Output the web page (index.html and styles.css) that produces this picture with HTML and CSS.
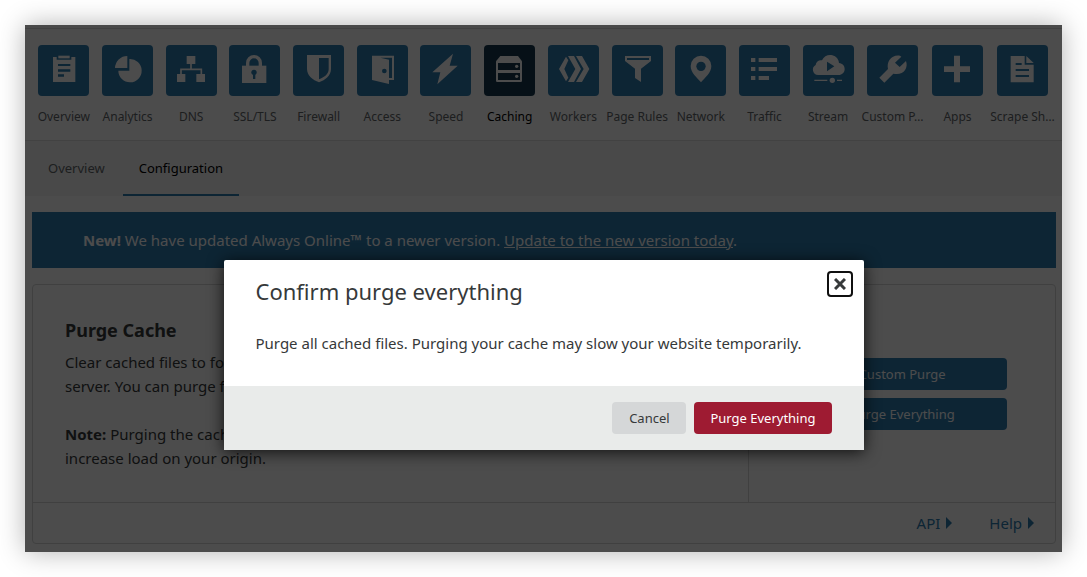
FILE: index.html
```html
<!DOCTYPE html>
<html lang="en">
<head>
<meta charset="utf-8">
<meta name="viewport" content="width=device-width, initial-scale=1">
<title>Caching – Configuration</title>
<link rel="stylesheet" href="styles.css">
</head>
<body>
<div class="window">
  <div class="topbar"></div>
  <nav class="apps" aria-label="Products">
    <a class="app" href="#"><span class="tile"><svg viewBox="0 0 153 153"><path class="f" d="M45 36H56V44H100V36H112V111H45Z"/><path class="f" d="M61 32H95V40H61Z"/><path class="d" d="M60 57H97V63H60ZM60 73H97V80H60ZM60 88H78V95H60Z"/></svg></span><span class="name">Overview</span></a>
    <a class="app" href="#"><span class="tile"><svg viewBox="0 0 153 153"><path class="f" d="M76 69H39A37 37 0 0 1 76 33Z"/><path class="f" d="M82 42A35 35 0 1 1 49 77H82Z"/></svg></span><span class="name">Analytics</span></a>
    <a class="app" href="#"><span class="tile"><svg viewBox="0 0 153 153"><path class="f" d="M62 33H88V57H62ZM33 87H58V111H33ZM91 87H117V111H91Z"/><path class="s" stroke-width="5" d="M75 57V73M45 88V73H106V88"/></svg></span><span class="name">DNS</span></a>
    <a class="app" href="#"><span class="tile"><svg viewBox="0 0 153 153"><path class="f" d="M39 62H112V114H39Z"/><path class="s" stroke-width="10" d="M56 64V54A19 19 0 0 1 94 54V64"/><circle class="d" cx="75" cy="82" r="8"/><path class="d" d="M72 82H79V102H72Z"/></svg></span><span class="name">SSL/TLS</span></a>
    <a class="app" href="#"><span class="tile"><svg viewBox="0 0 153 153"><path class="f" d="M42 30H114V72C114 91 97 105 78 112C59 105 42 91 42 72Z"/><path class="d" d="M78 39H107V72C107 88 93 97 78 103Z"/></svg></span><span class="name">Firewall</span></a>
    <a class="app" href="#"><span class="tile"><svg viewBox="0 0 153 153"><path class="f" d="M45 32H111V105H94V99H105V38H70L96 44V117L45 105Z"/><circle class="d" cx="82" cy="78" r="7"/></svg></span><span class="name">Access</span></a>
    <a class="app" href="#"><span class="tile"><svg viewBox="0 0 153 153"><path class="f" d="M99 26L37 82H61L52 118L113 62H89Z"/></svg></span><span class="name">Speed</span></a>
    <a class="app current" href="#" aria-current="page"><span class="tile"><svg viewBox="0 0 153 153"><path class="f" d="M49 33H102L114 49V107Q114 111 110 111H40Q36 111 36 107V49Z"/><path class="d" d="M42 54H108V75H42ZM42 84H108V105H42Z"/><circle class="f" cx="98" cy="64" r="5"/><circle class="f" cx="98" cy="94" r="5"/></svg></span><span class="name">Caching</span></a>
    <a class="app" href="#"><span class="tile"><svg viewBox="0 0 153 153"><path class="f" d="M54 35L33 72L54 109L61 98L49 72L61 46Z"/><path class="f" d="M60 33H78L99 72L78 111H60L82 72Z"/><path class="f" d="M84 33H102L124 72L102 111H84L107 72Z"/></svg></span><span class="name">Workers</span></a>
    <a class="app" href="#"><span class="tile"><svg viewBox="0 0 153 153"><path class="f" d="M39 33H117V48L87 71V111L69 99V71L39 48Z"/><path class="d" d="M45 39H111V45H45Z"/></svg></span><span class="name">Page Rules</span></a>
    <a class="app" href="#"><span class="tile"><svg viewBox="0 0 153 153"><path class="f" d="M78 32A31 31 0 0 1 109 63C109 84 90 97 78 112C66 97 47 84 47 63A31 31 0 0 1 78 32Z"/><circle class="d" cx="78" cy="64" r="14"/></svg></span><span class="name">Network</span></a>
    <a class="app" href="#"><span class="tile"><svg viewBox="0 0 153 153"><path class="f" d="M36 39H49V51H36ZM59 39H114V51H59ZM36 66H49V78H36ZM59 66H114V78H59ZM36 93H49V105H36ZM59 93H90V105H59Z"/></svg></span><span class="name">Traffic</span></a>
    <a class="app" href="#"><span class="tile"><svg viewBox="0 0 153 153"><path class="f" d="M46 90A16 16 0 0 1 38 60C39 49 49 44 57 46C63 33 76 28 88 31C100 34 107 43 108 54C119 55 125 63 125 72C125 83 117 90 107 90Z"/><path class="d" d="M72 50V79L94 64Z"/><path class="s" stroke-width="4" d="M34 106H73M102 106H117"/><circle class="f" cx="88" cy="106" r="8"/></svg></span><span class="name">Stream</span></a>
    <a class="app" href="#"><span class="tile"><svg viewBox="0 0 153 153"><path class="f" d="M37 98L63 72C58 50 73 28 99 32L103 35L84 53L98 66L117 48C125 70 108 93 79 86L52 113Z"/></svg></span><span class="name">Custom P…</span></a>
    <a class="app" href="#"><span class="tile"><svg viewBox="0 0 153 153"><path class="f" d="M66 32H84V64H114V81H84V112H66V81H36V64H66Z"/></svg></span><span class="name">Apps</span></a>
    <a class="app" href="#"><span class="tile"><svg viewBox="0 0 153 153"><path class="f" d="M41 33H83V59H110V112H41Z"/><path class="f" d="M88 33L110 54H88Z"/><path class="d" d="M56 54H74V60H56ZM56 72H96V78H56ZM56 90H96V96H56Z"/></svg></span><span class="name">Scrape Sh…</span></a>
  </nav>
  <nav class="tabs" aria-label="Caching">
    <a class="tab" href="#">Overview</a>
    <a class="tab selected" href="#" aria-current="page">Configuration</a>
  </nav>
  <main class="content">
    <p class="banner"><strong>New!</strong> We have updated Always Online™ to a newer version. <a href="#">Update to the new version today</a>.</p>
    <section class="card">
      <div class="card-body">
        <div class="card-text">
          <h2>Purge Cache</h2>
          <p>Clear cached files to force Cloudflare to fetch a fresh version from your web<br>server. You can purge files selectively or all at once.</p>
          <p><strong>Note:</strong> Purging the cache may temporarily degrade performance and<br>increase load on your origin.</p>
        </div>
        <div class="card-actions">
          <button class="btn blue" type="button">Custom Purge</button>
          <button class="btn blue" type="button">Purge Everything</button>
        </div>
      </div>
      <div class="card-links">
        <a href="#">API<svg viewBox="0 0 6 12"><path d="M0 0L6 6L0 12Z"/></svg></a>
        <a href="#">Help<svg viewBox="0 0 6 12"><path d="M0 0L6 6L0 12Z"/></svg></a>
      </div>
    </section>
  </main>
  <div class="overlay">
    <div class="modal" role="dialog" aria-modal="true" aria-labelledby="modal-title">
      <div class="modal-main">
        <h1 id="modal-title">Confirm purge everything</h1>
        <p>Purge all cached files. Purging your cache may slow your website temporarily.</p>
      </div>
      <button class="close" type="button" aria-label="Close"><svg viewBox="0 0 12 12"><path d="M1 1L11 11M11 1L1 11"/></svg></button>
      <div class="modal-foot">
        <button class="btn grey" type="button">Cancel</button>
        <button class="btn red" type="button">Purge Everything</button>
      </div>
    </div>
  </div>
</div>
</body>
</html>
```
FILE: styles.css
```css
* { box-sizing: border-box; }

body {
  margin: 0;
  padding: 25px;
  background: #fff;
  color: #36393a;
  font: 15px/24px "Noto Sans", sans-serif;
}

h1, h2, p { margin: 0; }
a { color: inherit; text-decoration: none; }

.window {
  position: relative;
  background: #fff;
  box-shadow: 0 0 25px rgba(0, 0, 0, .3);
}

.topbar {
  height: 4px;
  background: #f7f7f8;
  border-bottom: 1px solid #dedede;
}

.apps {
  display: grid;
  grid-template-columns: repeat(13, minmax(0, 1fr)) repeat(3, 65px);
  padding: 16px 7px 13px;
  border-bottom: 1px solid #dedede;
}
.app {
  display: flex;
  flex-direction: column;
  align-items: center;
  gap: 10px;
  color: #62676a;
  font-size: 12px;
  line-height: 21px;
}
.tile {
  width: 51px;
  height: 51px;
  border-radius: 4px;
  background: #2c7cb0;
}
.tile svg { display: block; }
.name { white-space: nowrap; }
.f { fill: #fff; }
.d { fill: #2c7cb0; }
.s { fill: none; stroke: #fff; }
.current { color: #000; }
.current .tile { background: #16384f; }
.current .d { fill: #16384f; }

.tabs {
  display: flex;
  gap: 2px;
  padding: 0 7px;
  background: #f5f5f6;
}
.tab {
  padding: 15px 16px 14px;
  border-bottom: 2px solid transparent;
  color: #62676a;
  font-size: 13px;
}
.selected {
  border-color: #2c7cb0;
  color: #000;
}

.content {
  display: flex;
  flex-direction: column;
  gap: 16px;
  padding: 16px 6px 8px 7px;
}
.banner {
  padding: 16px 51px;
  background: #2c7cb0;
  color: #fff;
}
.banner a { text-decoration: underline; }

.card {
  border: 1px solid #d5d7d8;
  border-radius: 4px;
}
.card-body {
  display: grid;
  grid-template-columns: 7fr 3fr;
  border-bottom: 1px solid #d5d7d8;
}
.card-text {
  padding: 32px 0 32px 32px;
  white-space: nowrap;
}
.card-text h2 {
  margin-bottom: 7px;
  font-size: 18px;
  line-height: 26px;
}
.card-text p + p { margin-top: 24px; }
.card-actions {
  display: flex;
  flex-direction: column;
  justify-content: center;
  gap: 8px;
  padding: 0 48px;
  border-left: 1px solid #d5d7d8;
}
.card-links {
  display: flex;
  justify-content: flex-end;
  gap: 37px;
  padding: 8px 21px;
  color: #2c7cb0;
}
.card-links a {
  display: flex;
  align-items: center;
  gap: 6px;
}
.card-links svg {
  width: 6px;
  fill: #2c7cb0;
}

.btn {
  min-width: 74px;
  height: 32px;
  padding: 0 16px;
  border: 0;
  border-radius: 4px;
  font: 13px/32px "Noto Sans", sans-serif;
}
.blue { background: #2c7cb0; color: #fff; }
.grey { background: #d5d7d8; color: #36393a; }
.red { background: #9e1b32; color: #fff; }

.overlay {
  position: absolute;
  inset: 0;
  display: flex;
  align-items: flex-start;
  justify-content: center;
  padding-top: 235px;
  background: rgba(0, 0, 0, .7);
}
.modal {
  position: relative;
  width: 640px;
  border-radius: 2px;
  background: #fff;
  box-shadow: 0 2px 16px rgba(0, 0, 0, .8);
}
.modal-main {
  display: flex;
  flex-direction: column;
  gap: 24px;
  padding: 15px 32px 31px;
}
.modal h1 {
  font-size: 22px;
  font-weight: 400;
  line-height: 32px;
}
.close {
  position: absolute;
  top: 11px;
  right: 11px;
  display: flex;
  align-items: center;
  justify-content: center;
  width: 26px;
  height: 26px;
  padding: 0;
  border: 2px solid #101010;
  border-radius: 4px;
  background: #fff;
}
.close svg {
  width: 12px;
  fill: none;
  stroke: #36393a;
  stroke-width: 3;
}
.modal-foot {
  display: flex;
  justify-content: flex-end;
  gap: 8px;
  padding: 16px 32px;
  background: #e9ebea;
}
```
